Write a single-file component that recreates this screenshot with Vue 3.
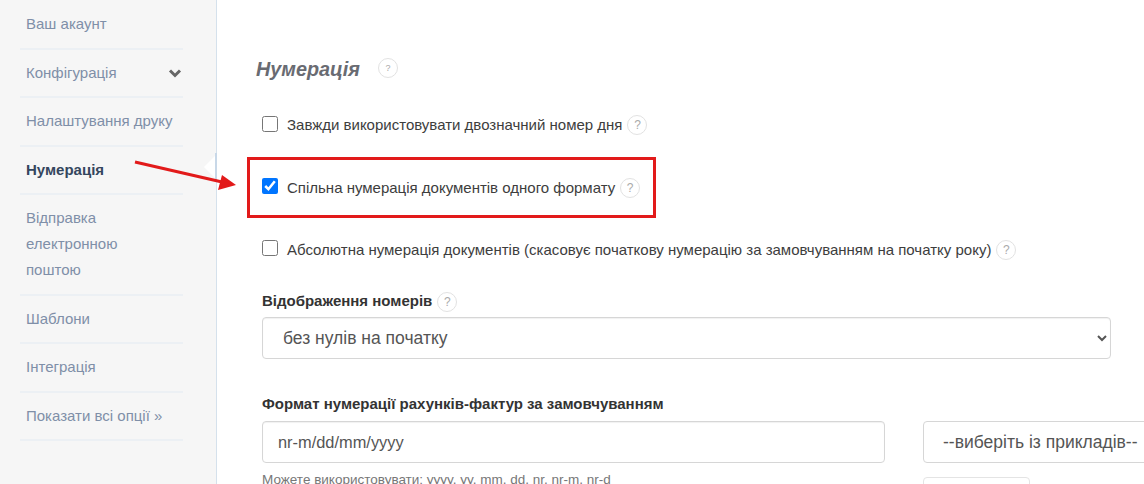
<template>
  <div class="page">
    <aside class="sidebar">
      <ul class="menu">
        <li v-for="item in menu" :key="item.label" :class="{ active: item.active }">
          <a class="menu-link">{{ item.label }}</a>
          <svg v-if="item.arrow" class="chev" width="14" height="10" viewBox="0 0 14 10">
            <path d="M2 2.5 L7 7.5 L12 2.5" fill="none" stroke="#666" stroke-width="3" />
          </svg>
        </li>
      </ul>
      <span class="notch"></span>
    </aside>

    <main class="content">
      <h2 class="title">Нумерація<span class="help big">?</span></h2>

      <label class="check first">
        <input type="checkbox" />
        <span>Завжди використовувати двозначний номер дня</span>
        <span class="help">?</span>
      </label>

      <div class="marked">
        <label class="check">
          <input type="checkbox" checked />
          <span>Спільна нумерація документів одного формату</span>
          <span class="help">?</span>
        </label>
      </div>

      <label class="check third">
        <input type="checkbox" />
        <span>Абсолютна нумерація документів (скасовує початкову нумерацію за замовчуванням на початку року)</span>
        <span class="help">?</span>
      </label>

      <div class="field-label numbers">Відображення номерів<span class="help">?</span></div>
      <select class="control select-wide">
        <option>без нулів на початку</option>
      </select>

      <div class="field-label format">Формат нумерації рахунків-фактур за замовчуванням</div>
      <div class="format-row">
        <div class="format-left">
          <input class="control format-input" type="text" value="nr-m/dd/mm/yyyy" />
          <p class="hint">Можете використовувати: yyyy, yy, mm, dd, nr, nr-m, nr-d</p>
        </div>
        <div class="format-right">
          <button class="control examples">--виберіть із прикладів--</button>
          <button class="small-btn"></button>
        </div>
      </div>
    </main>

    <svg class="arrow" width="110" height="40" viewBox="0 0 110 40">
      <line x1="1" y1="2" x2="88" y2="22" stroke="#e21a1a" stroke-width="3" />
      <path d="M102 25 L88 15 L84 30 Z" fill="#e21a1a" />
    </svg>
  </div>
</template>

<script setup>
const menu = [
  { label: 'Ваш акаунт' },
  { label: 'Конфігурація', arrow: true },
  { label: 'Налаштування друку' },
  { label: 'Нумерація', active: true },
  { label: 'Відправка електронною поштою' },
  { label: 'Шаблони' },
  { label: 'Інтеграція' },
  { label: 'Показати всі опції »' }
]
</script>

<style>
html, body {
  margin: 0;
  overflow: hidden;
}
</style>

<style scoped>
.page {
  position: relative;
  display: flex;
  width: 1144px;
  height: 484px;
  overflow: hidden;
  font-family: "Liberation Sans", Arial, sans-serif;
  color: #333;
  background: #fff;
}
.sidebar {
  position: relative;
  flex: 0 0 216px;
  background: #f6f6f6;
  border-right: 1px solid #d5e1ec;
}
.menu {
  list-style: none;
  margin: 0 33px 0 20px;
  padding: 1px 0 0;
}
.menu li {
  position: relative;
  padding: 10px 9px 10.5px 6px;
  border-bottom: 2px solid #ecf0f4;
  font-size: 15px;
  line-height: 26px;
  color: #7f8fa8;
}
.menu li.active {
  font-weight: bold;
  color: #34465e;
}
.chev {
  position: absolute;
  right: 1px;
  top: 18px;
}
.notch {
  position: absolute;
  right: -1px;
  top: 153px;
  width: 2px;
  height: 28px;
  background: #c8d8e8;
}
.notch::before {
  content: "";
  position: absolute;
  right: 2px;
  top: 3px;
  border: 11px solid transparent;
  border-left: 0;
  border-right-color: #fff;
}
.content {
  flex: 1;
  min-width: 0;
  padding: 57px 0 0 39px;
}
.title {
  margin: 0;
  font-size: 19.8px;
  line-height: 24px;
  font-style: italic;
  font-weight: bold;
  color: #696b72;
  display: flex;
  align-items: center;
}
.help {
  display: inline-flex;
  align-items: center;
  justify-content: center;
  box-sizing: border-box;
  width: 20px;
  height: 20px;
  margin-left: 5px;
  border: 1px solid #e2e2e2;
  border-radius: 50%;
  font-size: 12px;
  font-weight: normal;
  font-style: normal;
  color: #aaa;
  background: #fff;
  vertical-align: middle;
}
.help.big {
  margin-left: 18px;
  font-size: 9px;
  position: relative;
  top: -1px;
}
.check {
  display: flex;
  align-items: center;
  font-size: 15px;
  line-height: 20px;
  color: #3d3d3d;
  white-space: nowrap;
}
.check input {
  width: 16px;
  height: 16px;
  margin: 0 9px 0 0;
  accent-color: #0075ff;
  position: relative;
  top: -1px;
}
.check.first {
  margin: 34px 0 0 6px;
}
.marked {
  margin: 22px 0 0 -9px;
  width: 409px;
  height: 61px;
  box-sizing: border-box;
  border: 3px solid #e21a1a;
  padding: 0 0 0 12px;
  display: flex;
  align-items: center;
}
.marked .check input {
  top: -2px;
}
.third {
  margin: 22px 0 0 6px;
}
.third input {
  top: -2px;
}
.field-label {
  font-size: 15px;
  font-weight: bold;
  line-height: 20px;
  color: #333;
  margin-left: 6px;
}
.numbers {
  margin-top: 31px;
}
.control {
  box-sizing: border-box;
  border: 1px solid #d6d6d6;
  border-radius: 4px;
  background: #fff;
  font-family: inherit;
  color: #555;
  font-size: 17.5px;
  outline: none;
}
.select-wide {
  display: block;
  width: 849px;
  height: 42px;
  margin: 5px 0 0 6px;
  padding: 0 16px;
  box-shadow: inset 0 1px 1px rgba(0, 0, 0, 0.06);
}
.format {
  margin-top: 35px;
}
.format-row {
  display: flex;
  margin: 7px 0 0 6px;
}
.format-left {
  flex: 0 0 623px;
}
.format-input {
  display: block;
  width: 623px;
  height: 42px;
  padding: 0 15px;
  font-size: 16.4px;
  box-shadow: inset 0 1px 1px rgba(0, 0, 0, 0.06);
}
.hint {
  margin: 8px 0 0;
  font-size: 13.5px;
  line-height: 17px;
  color: #777;
}
.format-right {
  margin-left: 38px;
  flex: none;
}
.examples {
  display: block;
  width: 240px;
  height: 42px;
  padding: 0 0 0 19px;
  text-align: left;
}
.small-btn {
  display: block;
  width: 107px;
  height: 30px;
  margin-top: 14px;
  border: 1px solid #e4e4e4;
  border-radius: 4px;
  background: #fff;
}
.arrow {
  position: absolute;
  left: 134px;
  top: 160px;
}
</style>
